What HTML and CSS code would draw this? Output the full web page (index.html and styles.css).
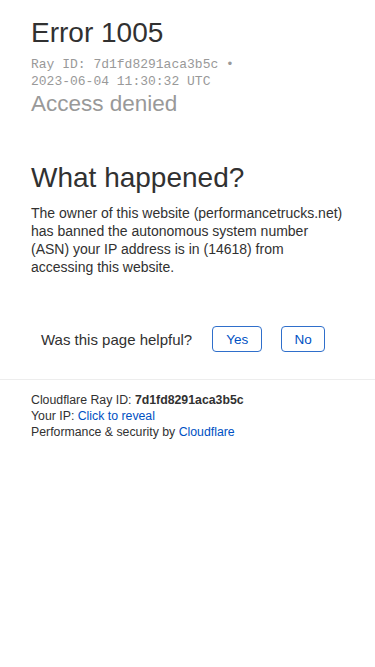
FILE: index.html
```html
<!DOCTYPE html>
<html lang="en-US">
<head>
  <meta charset="UTF-8">
  <meta name="viewport" content="width=device-width, initial-scale=1.0">
  <title>Access denied | performancetrucks.net used Cloudflare to restrict access</title>
  <link rel="stylesheet" href="styles.css">
</head>
<body>
  <div class="wrapper">
    <header class="header">
      <h1 class="title">Error 1005</h1>
      <div class="ray">Ray ID: 7d1fd8291aca3b5c &bull;<br>2023-06-04 11:30:32 UTC</div>
      <h2 class="subtitle">Access denied</h2>
    </header>
    <section class="what">
      <h2 class="title">What happened?</h2>
      <p class="text">The owner of this website (performancetrucks.net) has banned the autonomous system number (ASN) your IP address is in (14618) from accessing this website.</p>
    </section>
    <div class="feedback">
      <span class="question">Was this page helpful?</span>
      <button class="feedback-button">Yes</button>
      <button class="feedback-button">No</button>
    </div>
  </div>
  <footer class="footer">
    <div>Cloudflare Ray ID: <strong>7d1fd8291aca3b5c</strong></div>
    <div>Your IP: <a href="#" class="link">Click to reveal</a></div>
    <div>Performance &amp; security by <a href="#" class="link">Cloudflare</a></div>
  </footer>
</body>
</html>
```

FILE: styles.css
```css
body {
  margin: 0;
  font-family: 'Liberation Sans', Arial, sans-serif;
  color: #313131;
  background-color: #ffffff;
}
.wrapper {
  padding: 16px 31px 0;
}
.title {
  margin: 0;
  font-size: 28px;
  font-weight: 400;
  line-height: 34px;
  color: #313131;
}
.ray {
  margin-top: 6px;
  font-family: 'Liberation Mono', 'Courier New', monospace;
  font-size: 13px;
  line-height: 17px;
  color: #999999;
}
.subtitle {
  margin: 1px 0 0;
  font-size: 22.5px;
  font-weight: 400;
  line-height: 26px;
  color: #999999;
}
.what {
  margin-top: 44px;
}
.text {
  margin: 9px 0 0;
  font-size: 14px;
  line-height: 18px;
}
.feedback {
  display: flex;
  align-items: center;
  margin-top: 50px;
  padding-left: 10px;
}
.question {
  font-size: 15px;
  white-space: nowrap;
  margin-right: 20px;
}
.feedback-button {
  box-sizing: border-box;
  width: 55px;
  height: 26px;
  margin-right: 19px;
  padding: 0;
  background-color: #ffffff;
  color: #0051c3;
  border: 1px solid #2f6fcb;
  border-radius: 4px;
  font-family: 'Liberation Sans', Arial, sans-serif;
  font-size: 13.5px;
  cursor: pointer;
}
.feedback-button + .feedback-button {
  width: 48px;
}
.footer {
  margin-top: 27px;
  padding: 12px 31px;
  border-top: 1px solid #ededed;
  font-size: 12.3px;
  line-height: 16px;
}
.link {
  color: #0051c3;
  text-decoration: none;
}
```
